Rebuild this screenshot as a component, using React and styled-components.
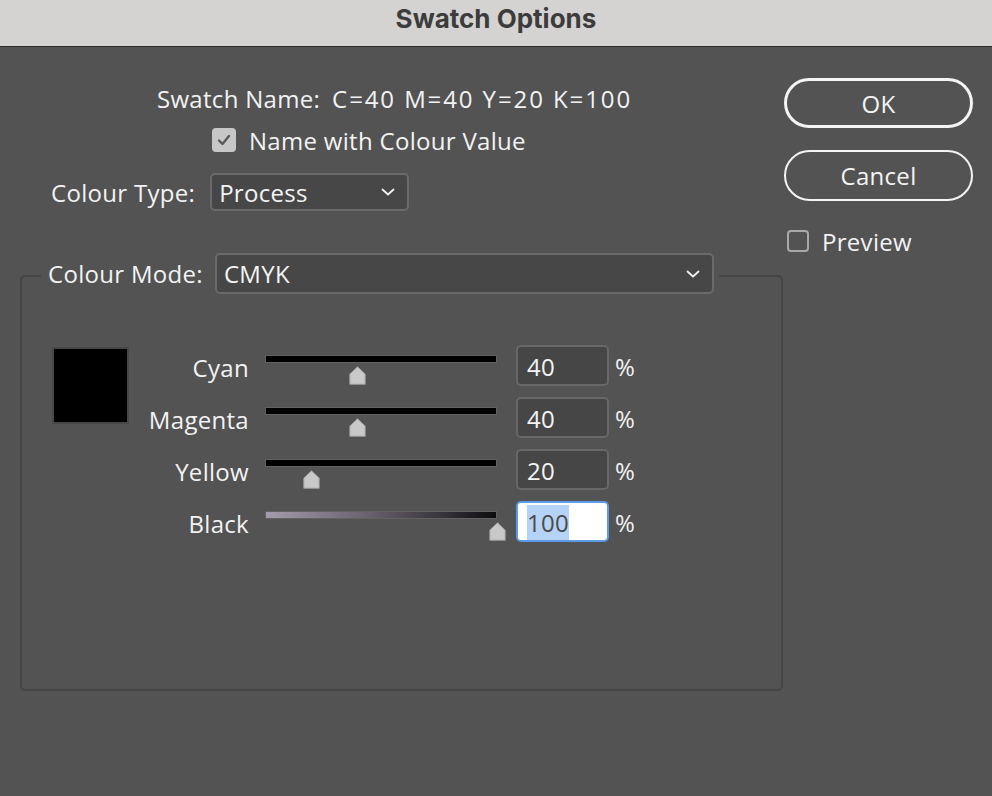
import React from 'react'
import styled, { createGlobalStyle } from 'styled-components'

const GlobalStyle = createGlobalStyle`
  html, body {
    margin: 0;
    padding: 0;
    background: #535353;
  }
  body {
    font-family: 'Open Sans', 'Noto Sans', sans-serif;
    font-size: 24px;
    letter-spacing: 0.3px;
    color: #f2f2f2;
  }
`;

const Window = styled.div`
  width: 992px;
  height: 796px;
  background: #535353;
  overflow: hidden;
`;

const TitleBar = styled.div`
  height: 47px;
  box-sizing: border-box;
  padding-bottom: 9px;
  background: #d4d3d1;
  border-bottom: 1px solid #2c2c2c;
  display: flex;
  align-items: center;
  justify-content: center;
  font-family: 'Inter', 'Liberation Sans', sans-serif;
  font-weight: 700;
  font-size: 26px;
  letter-spacing: 0;
  color: #3c3c3c;
`;

const Main = styled.div`
  display: flex;
  padding: 0 19px 0 20px;
`;

const LeftCol = styled.div`
  width: 763px;
  display: flex;
  flex-direction: column;
`;

const RightCol = styled.div`
  margin-left: 1px;
  width: 189px;
  padding-top: 31px;
  display: flex;
  flex-direction: column;
`;

const NameLine = styled.div`
  margin-top: 37px;
  padding-left: 137px;
  height: 30px;
  line-height: 30px;
  white-space: nowrap;
  display: flex;
  gap: 12px;
`;

const NameValue = styled.span`
  letter-spacing: 1.9px;
`;

const CheckRow = styled.label`
  display: flex;
  align-items: center;
  gap: 13px;
  height: 30px;
  white-space: nowrap;
  padding-left: ${p => p.$indent || 0}px;
  margin-top: ${p => p.$top || 0}px;
`;

const Box = styled.span`
  width: ${p => p.$size}px;
  height: ${p => p.$size}px;
  box-sizing: border-box;
  border-radius: 4px;
  flex: none;
  display: flex;
  align-items: center;
  justify-content: center;
  background: ${p => (p.$checked ? '#c7c7c7' : 'transparent')};
  border: ${p => (p.$checked ? 'none' : '2px solid #a9a9a9')};
`;

const TypeRow = styled.div`
  margin-top: 18px;
  display: flex;
  align-items: center;
  padding-left: 31px;
  gap: 15px;
`;

const Select = styled.div`
  width: ${p => p.$width}px;
  height: ${p => p.$height}px;
  box-sizing: border-box;
  background: #474747;
  border: 2px solid #6a6a6a;
  border-radius: 5px;
  display: flex;
  align-items: center;
  justify-content: space-between;
  padding: 0 12px 0 7px;
  color: #f4f4f4;
`;

const Group = styled.fieldset`
  margin: 42px 0 0 0;
  height: 438px;
  box-sizing: border-box;
  border: 2px solid #454545;
  border-radius: 5px;
  padding: 0 0 0 30px;
  min-width: 0;
`;

const Legend = styled.legend`
  margin-left: -11px;
  padding: 0 5px 5px 7px;
  display: flex;
  align-items: center;
  gap: 12px;
  white-space: nowrap;
`;

const Body = styled.div`
  margin-top: 46px;
  display: flex;
  align-items: flex-start;
`;

const Swatch = styled.div`
  margin-top: 2px;
  width: 77px;
  height: 77px;
  box-sizing: border-box;
  background: #000;
  border: 2px solid #474747;
  flex: none;
`;

const Rows = styled.div`
  margin-left: 11px;
  display: flex;
  flex-direction: column;
  gap: 11px;
`;

const Row = styled.div`
  display: flex;
  align-items: center;
  height: 41px;
`;

const RowLabel = styled.div`
  width: 109px;
  text-align: right;
  margin-right: 16px;
  padding-top: 3px;
`;

const Slider = styled.div`
  position: relative;
  width: 232px;
  height: 41px;
  margin-right: 19px;
`;

const Track = styled.div`
  position: absolute;
  left: 0;
  right: 0;
  top: 10px;
  height: 8px;
  box-sizing: border-box;
  border: 1px solid #616161;
  background: ${p => p.$fill};
`;

const Thumb = styled.svg`
  position: absolute;
  top: 21px;
  width: 17px;
  height: 19px;
  margin-left: -8.5px;
`;

const Field = styled.div`
  width: 93px;
  height: 41px;
  box-sizing: border-box;
  border-radius: 5px;
  border: 2px solid ${p => (p.$focus ? '#5b9ae6' : '#686868')};
  background: ${p => (p.$focus ? '#ffffff' : '#464646')};
  color: ${p => (p.$focus ? '#4a4a4a' : '#f4f4f4')};
  display: flex;
  align-items: center;
  padding-left: 9px;
  padding-top: 2px;
`;

const Selected = styled.span`
  background: #b5d3f6;
  padding: 1px 0;
`;

const Percent = styled.span`
  margin-left: 6px;
  padding-top: 2px;
`;

const PillButton = styled.button`
  width: 189px;
  height: ${p => p.$height}px;
  box-sizing: border-box;
  border-radius: 26px;
  border: ${p => p.$weight}px solid #f4f4f4;
  background: transparent;
  color: #f4f4f4;
  font-family: 'Open Sans', 'Noto Sans', sans-serif;
  font-size: 24px;
  letter-spacing: 0.3px;
  margin-bottom: ${p => p.$after}px;
  cursor: pointer;
`;

function Chevron() {
  return (
    <svg width="14" height="8" viewBox="0 0 14 8">
      <path d="M1.5 1.5 L7 6.5 L12.5 1.5" fill="none" stroke="#f0f0f0" strokeWidth="1.8" strokeLinecap="round" strokeLinejoin="round" />
    </svg>
  );
}

function Check() {
  return (
    <svg width="16" height="14" viewBox="0 0 16 14">
      <path d="M3 7.5 L6.5 11 L13 3" fill="none" stroke="#5a5a5a" strokeWidth="2.4" strokeLinecap="round" strokeLinejoin="round" />
    </svg>
  );
}

const channels = [
  { name: 'Cyan', value: 40, fill: '#000' },
  { name: 'Magenta', value: 40, fill: '#000' },
  { name: 'Yellow', value: 20, fill: '#000' },
  { name: 'Black', value: 100, fill: 'linear-gradient(to right, #a39cab, #6e6875 40%, #3a363d 75%, #0c0b0d)', focus: true },
];

export default function App() {
  return (
    <Window>
      <GlobalStyle />
      <TitleBar>Swatch Options</TitleBar>
      <Main>
        <LeftCol>
          <NameLine>
            <span>Swatch Name:</span>
            <NameValue>C=40 M=40 Y=20 K=100</NameValue>
          </NameLine>
          <CheckRow $indent={192} $top={11}>
            <Box $size={24} $checked><Check /></Box>
            Name with Colour Value
          </CheckRow>
          <TypeRow>
            Colour Type:
            <Select $width={199} $height={38}>Process <Chevron /></Select>
          </TypeRow>
          <Group>
            <Legend>
              Colour Mode:
              <Select $width={499} $height={41}>CMYK <Chevron /></Select>
            </Legend>
            <Body>
              <Swatch />
              <Rows>
                {channels.map(c => (
                  <Row key={c.name}>
                    <RowLabel>{c.name}</RowLabel>
                    <Slider>
                      <Track $fill={c.fill} />
                      <Thumb viewBox="0 0 17 19" style={{ left: `${c.value}%` }}>
                        <path d="M8.5 0.8 L16.2 8 L16.2 18.3 L0.8 18.3 L0.8 8 Z" fill="#c9c9c9" stroke="#9a9a9a" strokeWidth="1" />
                      </Thumb>
                    </Slider>
                    <Field $focus={c.focus}>
                      {c.focus ? <Selected>{c.value}</Selected> : c.value}
                    </Field>
                    <Percent>%</Percent>
                  </Row>
                ))}
              </Rows>
            </Body>
          </Group>
        </LeftCol>
        <RightCol>
          <PillButton $height={50} $weight={3} $after={22}>OK</PillButton>
          <PillButton $height={51} $weight={2} $after={25}>Cancel</PillButton>
          <CheckRow>
            <Box $size={22} style={{ marginLeft: 3 }} />
            Preview
          </CheckRow>
        </RightCol>
      </Main>
    </Window>
  );
}
